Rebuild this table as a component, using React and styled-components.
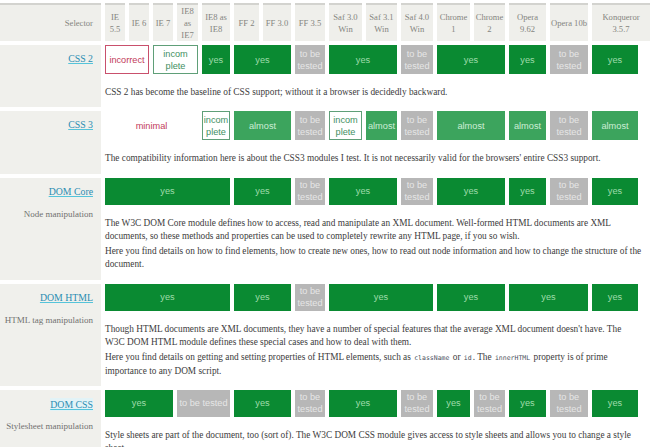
import React from "react";
import styled, { createGlobalStyle, css } from "styled-components";

const GlobalStyle = createGlobalStyle`
  html, body { margin: 0; padding: 0; background: #fff; }
  body { font-family: "Liberation Serif", serif; color: #3c3c3c; }
`;

// inline code in the descriptions (needed by the data below)
const Code = styled.code`
  font-family: "DejaVu Sans Mono", monospace;
  font-size: 6.5px;
  line-height: 1;
  margin: 0 1px;
  color: #4a5060;
`;

const browsers = [
  "IE\n5.5", "IE 6", "IE 7", "IE8\nas\nIE7", "IE8 as\nIE8", "FF 2", "FF 3.0", "FF 3.5",
  "Saf 3.0\nWin", "Saf 3.1\nWin", "Saf 4.0\nWin", "Chrome\n1", "Chrome\n2",
  "Opera\n9.62", "Opera 10b", "Konqueror\n3.5.7",
];

const TBT = "to be tested";

// text: paragraphs, each one a list of lines as they wrap in the page
const features = [
  {
    name: "CSS 2",
    cells: [
      ["incorrect", "incorrect", 2], ["incomplete", "incom\nplete", 2], ["yes", "yes", 1],
      ["yes", "yes", 2], ["tbt", TBT, 1], ["yes", "yes", 2], ["tbt", TBT, 1],
      ["yes", "yes", 2], ["yes", "yes", 1], ["tbt", TBT, 1], ["yes", "yes", 1],
    ],
    text: [["CSS 2 has become the baseline of CSS support; without it a browser is decidedly backward."]],
  },
  {
    name: "CSS 3",
    cells: [
      ["minimal", "minimal", 4], ["incomplete", "incom\nplete", 1], ["almost", "almost", 2],
      ["tbt", TBT, 1], ["incomplete", "incom\nplete", 1], ["almost", "almost", 1],
      ["tbt", TBT, 1], ["almost", "almost", 2], ["almost", "almost", 1], ["tbt", TBT, 1],
      ["almost", "almost", 1],
    ],
    text: [["The compatibility information here is about the CSS3 modules I test. It is not necessarily valid for the browsers' entire CSS3 support."]],
  },
  {
    name: "DOM Core",
    sub: "Node manipulation",
    cells: [
      ["yes", "yes", 5], ["yes", "yes", 2], ["tbt", TBT, 1], ["yes", "yes", 2],
      ["tbt", TBT, 1], ["yes", "yes", 2], ["yes", "yes", 1], ["tbt", TBT, 1], ["yes", "yes", 1],
    ],
    text: [
      [
        "The W3C DOM Core module defines how to access, read and manipulate an XML document. Well-formed HTML documents are XML",
        "documents, so these methods and properties can be used to completely rewrite any HTML page, if you so wish.",
      ],
      [
        "Here you find details on how to find elements, how to create new ones, how to read out node information and how to change the structure of the",
        "document.",
      ],
    ],
  },
  {
    name: "DOM HTML",
    sub: "HTML tag manipulation",
    cells: [
      ["yes", "yes", 5], ["yes", "yes", 2], ["tbt", TBT, 1], ["yes", "yes", 3],
      ["yes", "yes", 2], ["yes", "yes", 2], ["yes", "yes", 1],
    ],
    text: [
      [
        "Though HTML documents are XML documents, they have a number of special features that the average XML document doesn't have. The",
        "W3C DOM HTML module defines these special cases and how to deal with them.",
      ],
      [
        <>Here you find details on getting and setting properties of HTML elements, such as <Code>className</Code> or <Code>id</Code>. The <Code>innerHTML</Code> property is of prime</>,
        "importance to any DOM script.",
      ],
    ],
  },
  {
    name: "DOM CSS",
    sub: "Stylesheet manipulation",
    highlight: true,
    cells: [
      ["yes", "yes", 3], ["tbt", TBT, 2], ["yes", "yes", 2], ["tbt", TBT, 1],
      ["yes", "yes", 2], ["tbt", TBT, 1], ["yes", "yes", 1], ["tbt", TBT, 1],
      ["yes", "yes", 1], ["tbt", TBT, 1], ["yes", "yes", 1],
    ],
    text: [[
      "Style sheets are part of the document, too (sort of). The W3C DOM CSS module gives access to style sheets and allows you to change a style",
      "sheet.",
    ]],
  },
];

export default function App() {
  return (
    <>
      <GlobalStyle />
      <Table>
        <HeadCell $first>Selector</HeadCell>
        {browsers.map((b, i) => (
          <HeadCell key={b} $last={i === browsers.length - 1}>{b}</HeadCell>
        ))}

        {features.map((f) => (
          <React.Fragment key={f.name}>
            <Label>
              <FeatureLink href="#" $highlight={f.highlight}>{f.name}</FeatureLink>
              {f.sub && <Sub>{f.sub}</Sub>}
            </Label>
            {f.cells.map(([kind, txt, span], i) => (
              <Cell key={i} $kind={kind} $span={span}>{txt}</Cell>
            ))}
            <Description>
              {f.text.map((lines, i) => (
                <P key={i}>
                  {lines.map((line, j) => (
                    <React.Fragment key={j}>
                      {j > 0 && <br />}
                      {line}
                    </React.Fragment>
                  ))}
                </P>
              ))}
            </Description>
          </React.Fragment>
        ))}
      </Table>
    </>
  );
}

/* ---------------- Styled Components ---------------- */

const Table = styled.div`
  display: grid;
  grid-template-columns: 101px 20px 20px 20px 21px 28px 25px 28px 30px 33px 31px 32px 33px 31px 37px 38px 46px 8px;
  gap: 4px;
  padding-top: 3px;
  width: 650px;
`;

const HeadCell = styled.div`
  display: flex;
  align-items: center;
  justify-content: center;
  min-height: 36px;
  background: #efefeb;
  border-top: 2px solid #d3d3cf;
  color: #85857f;
  font-size: 8.6px;
  line-height: 12px;
  text-align: center;
  white-space: pre-line;

  ${({ $first }) => $first && css`
    justify-content: flex-end;
    padding-right: 8px;
  `}
  ${({ $last }) => $last && css`
    grid-column: span 2;
  `}
`;

const Label = styled.div`
  grid-column: 1;
  grid-row: span 2;
  display: flex;
  flex-direction: column;
  align-items: flex-end;
  padding-right: 8px;
  background: #f0f0ec;
`;

const FeatureLink = styled.a`
  line-height: 27px;
  font-size: 9.8px;
  color: #2a8db2;
  text-decoration: underline;
  text-decoration-color: #55c4da;

  ${({ $highlight }) => $highlight && css`
    line-height: 13px;
    margin: 8px 0 6px;
    background: #e2f3f7;
  `}
`;

const Sub = styled.div`
  margin-top: 3px;
  font-size: 9px;
  line-height: 12px;
  color: #707070;
`;

const kinds = {
  yes: css`background: #0a8a32; color: #9fdcaa;`,
  almost: css`background: #3ca45d; color: #cdeed5;`,
  tbt: css`background: #b7b7b7; color: #e6e6e6;`,
  incorrect: css`background: #fff; color: #c23a5a; border: 1px solid #c9506c;`,
  incomplete: css`background: #fff; color: #3f8f62; border: 1px solid #5f9f78;`,
  minimal: css`background: transparent; color: #c23a5a;`,
};

const Cell = styled.div`
  grid-column: span ${({ $span }) => $span};
  display: flex;
  align-items: center;
  justify-content: center;
  min-height: 27px;
  padding: 0 1px;
  font-family: "Liberation Sans", Arial, sans-serif;
  font-size: 9.2px;
  line-height: 12px;
  text-align: center;
  white-space: pre-line;
  ${({ $kind }) => kinds[$kind]}
`;

const Description = styled.div`
  grid-column: 2 / -1;
  padding: 8px 0;
  font-size: 9.3px;
  line-height: 13.3px;
  white-space: nowrap;
  color: #3c3c3c;
`;

const P = styled.p`
  margin: 0;
  & + & { margin-top: 2px; }
`;
